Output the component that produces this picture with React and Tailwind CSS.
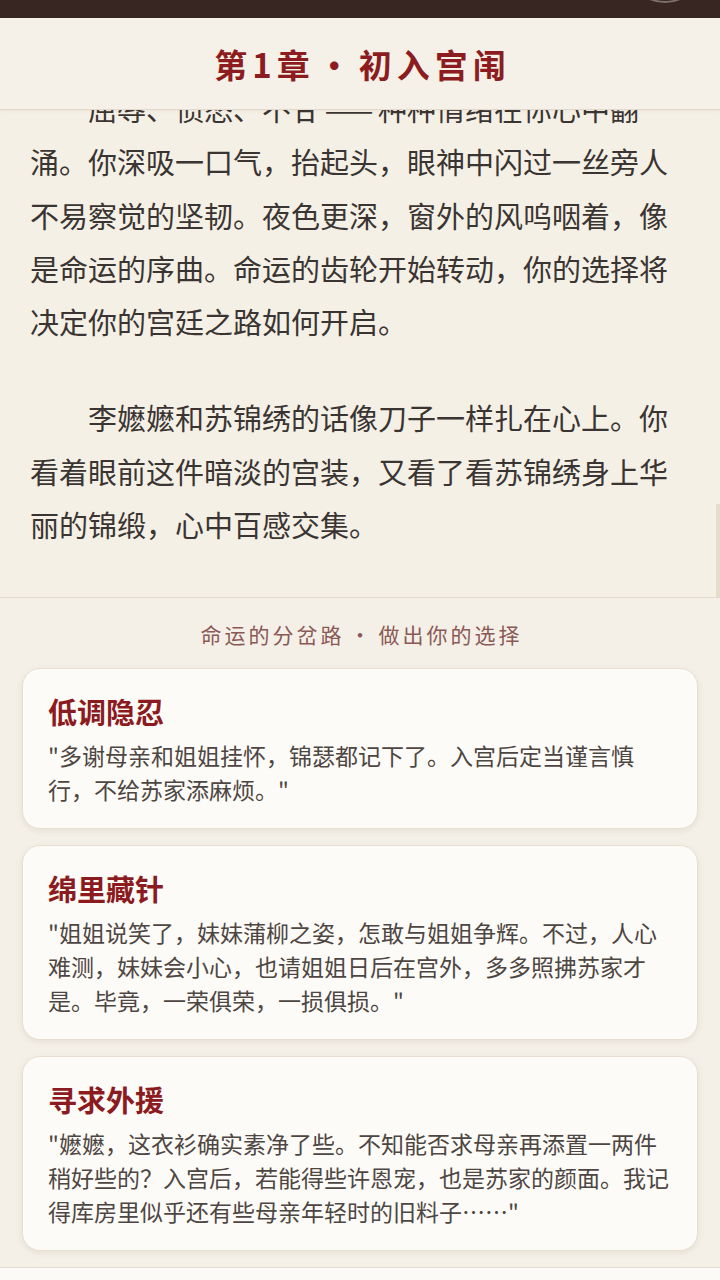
import React from 'react';

const choices = [
  {
    title: '低调隐忍',
    text: '"多谢母亲和姐姐挂怀，锦瑟都记下了。入宫后定当谨言慎行，不给苏家添麻烦。"',
  },
  {
    title: '绵里藏针',
    text: '"姐姐说笑了，妹妹蒲柳之姿，怎敢与姐姐争辉。不过，人心难测，妹妹会小心，也请姐姐日后在宫外，多多照拂苏家才是。毕竟，一荣俱荣，一损俱损。"',
  },
  {
    title: '寻求外援',
    text: '"嬷嬷，这衣衫确实素净了些。不知能否求母亲再添置一两件稍好些的？入宫后，若能得些许恩宠，也是苏家的颜面。我记得库房里似乎还有些母亲年轻时的旧料子……"',
  },
];

function ChoiceCard({ title, text }) {
  return (
    <button className="w-full text-left rounded-[18px] border border-[#e8dfd1] bg-[#fdfbf7] px-[25px] pt-[25px] pb-[22px] shadow-[0_2px_6px_rgba(120,90,60,0.10)]">
      <div className="text-[29px] leading-[34px] font-bold text-[#8b1b1f]">{title}</div>
      <p className="mt-[10px] text-[23px] leading-[34px] text-[#4d4643]">{text}</p>
    </button>
  );
}

export default function App() {
  return (
    <main className="h-[1280px] w-full flex flex-col overflow-hidden bg-[#f5f0e6] font-['Noto_Sans_CJK_SC','Noto_Sans',sans-serif]">
      {/* top bar */}
      <div className="h-[18px] shrink-0 bg-[#372621] flex justify-end overflow-hidden">
        <div className="w-[78px] h-[78px] -mt-[75px] mr-[16px] rounded-full border-2 border-[#7c716a] shrink-0" />
      </div>

      {/* chapter header */}
      <header className="h-[92px] shrink-0 bg-[#f6f1e8] border-b border-[#e2d9cb] flex items-center justify-center shadow-[0_1px_3px_rgba(120,90,60,0.08)] relative z-10">
        <h1 className="text-[33px] leading-[40px] font-bold tracking-[5px] text-[#8c1c20] pl-[5px]">
          第1章<span className="px-[3px]">·</span>初入宫闱
        </h1>
      </header>

      {/* story text */}
      <section className="flex-1 relative overflow-hidden bg-[#f5f0e6]">
        <div className="-mt-[28px] px-[30px] text-[29px] leading-[53.3px] text-[#3a3532]">
          <p className="indent-[2em]">
            屈辱、愤怒、不甘<span className="inline-block w-[2em] text-center indent-0">——</span>种种情绪在你心中翻涌。你深吸一口气，抬起头，眼神中闪过一丝旁人不易察觉的坚韧。夜色更深，窗外的风呜咽着，像是命运的序曲。命运的齿轮开始转动，你的选择将决定你的宫廷之路如何开启。
          </p>
          <p className="indent-[2em] mt-[43px]">
            李嬷嬷和苏锦绣的话像刀子一样扎在心上。你看着眼前这件暗淡的宫装，又看了看苏锦绣身上华丽的锦缎，心中百感交集。
          </p>
        </div>
        <div className="absolute right-0 bottom-0 w-[4px] h-[93px] bg-[#e6dccb]" />
      </section>

      {/* choices */}
      <section className="shrink-0 border-t border-[#e3dacb] bg-[#f4f0e8] px-[22px] pt-[21px] pb-[16px]">
        <div className="text-center text-[21px] leading-[30px] tracking-[3px] text-[#8a5955] pl-[3px]">
          命运的分岔路<span className="px-[5px]">·</span>做出你的选择
        </div>
        <div className="mt-[19px] flex flex-col gap-[16px]">
          {choices.map((c) => (
            <ChoiceCard key={c.title} title={c.title} text={c.text} />
          ))}
        </div>
      </section>

      <div className="h-[13px] shrink-0 border-t border-[#e3dbcf] bg-[#fbfaf7]" />
    </main>
  );
}
